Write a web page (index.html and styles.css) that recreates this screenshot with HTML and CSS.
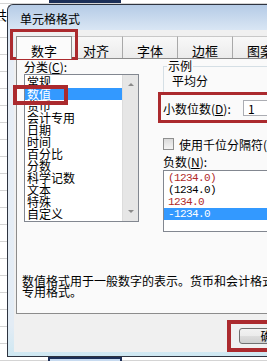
FILE: index.html
```html
<!DOCTYPE html>
<html lang="zh-CN">
<head>
    <meta charset="UTF-8">
    <title>单元格格式</title>
    <link rel="stylesheet" href="styles.css">
</head>
<body>

<div class="sheet">
    <span class="cell-text">共</span>
    <div class="sel-top"></div>
    <div class="sel-bottom"></div>
</div>

<div class="dialog">
    <div class="titlebar">单元格格式</div>
    <div class="client">
        <div class="tabs">
            <div class="tab active">数字</div>
            <div class="tab next">对齐</div>
            <div class="tab">字体</div>
            <div class="tab">边框</div>
            <div class="tab">图案</div>
        </div>
        <div class="panel">
            <div class="cols">
                <div class="left">
                    <div class="lbl">分类(<u>C</u>):</div>
                    <div class="catlist">
                        <ul class="items">
                            <li>常规</li>
                            <li class="sel">数值</li>
                            <li>货币</li>
                            <li>会计专用</li>
                            <li>日期</li>
                            <li>时间</li>
                            <li>百分比</li>
                            <li>分数</li>
                            <li>科学记数</li>
                            <li>文本</li>
                            <li>特殊</li>
                            <li>自定义</li>
                        </ul>
                        <div class="scroll">
                            <span class="arrow up"></span>
                            <span class="arrow down"></span>
                        </div>
                    </div>
                </div>
                <div class="right">
                    <fieldset class="sample">
                        <legend>示例</legend>
                        <div>平均分</div>
                    </fieldset>
                    <div class="decimals">
                        <span class="dec-label">小数位数(<u>D</u>):</span>
                        <input class="spin" type="text" value="1">
                    </div>
                    <div class="check"><span class="box"></span>使用千位分隔符(,)(<u>U</u>)</div>
                    <div class="lbl neg-label">负数(<u>N</u>):</div>
                    <ul class="neglist">
                        <li class="red">(1234.0)</li>
                        <li>(1234.0)</li>
                        <li class="red">1234.0</li>
                        <li class="sel">-1234.0</li>
                    </ul>
                </div>
            </div>
            <p class="desc">数值格式用于一般数字的表示。货币和会计格式则提供货币值计算的<br>专用格式。</p>
        </div>
        <div class="buttons">
            <button type="button">确定</button>
            <button type="button">取消</button>
        </div>
    </div>
</div>

<!-- red highlight boxes drawn over the dialog -->
<div class="mark m1"></div>
<div class="mark m2"></div>
<div class="mark m3"></div>
<div class="mark m4"></div>

</body>
</html>
```

FILE: styles.css
```css
* {
    box-sizing: border-box;
}
body {
    margin: 0;
    width: 267px;
    height: 361px;
    overflow: hidden;
    position: relative;
    font-family: "Noto Sans CJK SC", sans-serif;
    font-size: 12px;
    color: #000;
    background: #fff;
}
.sheet {
    position: absolute;
    inset: 0;
    background-image: repeating-linear-gradient(to bottom, #d4d4d4 0 1px, transparent 1px 17px);
    background-position: 0 3px;
}
.cell-text {
    position: absolute;
    left: -6px;
    top: 7px;
    font-size: 13px;
    line-height: 15px;
}
.sel-top {
    position: absolute;
    left: 49px;
    top: 0;
    width: 72px;
    height: 3px;
    background: #1c2f57;
}
.sel-bottom {
    position: absolute;
    left: 48px;
    top: 357px;
    width: 74px;
    height: 8px;
    border: 2px solid #1c2f57;
    border-bottom: 0;
    background: #c8dbf0;
}
.dialog {
    position: absolute;
    left: 7px;
    top: 4px;
    width: 300px;
    height: 353px;
    border: 1px solid #2e3440;
    border-right: 0;
    border-radius: 6px 0 0 0;
    padding: 0 0 4px 6px;
    background: linear-gradient(to bottom, #b5cbe6 0, #d9e6f4 25px, #e8eef6 60px, #e3ecf5 320px, #cfe8f2 100%);
}
.titlebar {
    height: 25px;
    line-height: 27px;
    padding-left: 6px;
    font-size: 12px;
}
.client {
    height: 322px;
    background: #f0f0f0;
    padding: 6px 0 0 2px;
}
.tabs {
    display: flex;
    height: 22px;
}
.tab {
    flex-shrink: 0;
    width: 55px;
    height: 22px;
    padding: 5px 0 0 14px;
    line-height: 17px;
    font-size: 13px;
    border-top: 1px solid #c8c8c8;
    border-right: 1px solid #a9a9a9;
    background: linear-gradient(#f8f8f8, #ebebeb);
    white-space: nowrap;
}
.tab.next {
    width: 51px;
    padding-left: 11px;
}
.tab.active {
    width: 56px;
    height: 23px;
    margin-bottom: -1px;
    position: relative;
    z-index: 1;
    border: 1px solid #8c8c8c;
    border-bottom: 0;
    background: #fbfbfb;
}
.panel {
    height: 256px;
    border: 1px solid #8c8c8c;
    border-right: 0;
    background: #fafafa;
    padding-left: 7px;
}
.cols {
    display: flex;
    gap: 24px;
}
.left {
    flex-shrink: 0;
    width: 115px;
}
.lbl {
    height: 15px;
    padding-top: 1px;
    line-height: 14px;
    white-space: nowrap;
}
.catlist {
    height: 148px;
    display: flex;
    border: 1px solid #828790;
    background: #fff;
    overflow: hidden;
}
.items {
    flex: 1;
    list-style: none;
    margin: 0;
    padding: 1px 0 0;
    line-height: 12px;
}
.items li {
    height: 12px;
    padding-left: 2px;
    white-space: nowrap;
}
.items li.sel,
.neglist li.sel {
    background: #3399ff;
    color: #fff;
}
.scroll {
    width: 16px;
    background: #e6e6e6;
    border-left: 1px solid #dcdcdc;
    display: flex;
    flex-direction: column;
    justify-content: space-between;
    align-items: center;
    padding: 8px 0 8px;
}
.arrow {
    width: 0;
    height: 0;
    border-left: 3px solid transparent;
    border-right: 3px solid transparent;
}
.arrow.up {
    border-bottom: 3px solid #8a8a8a;
}
.arrow.down {
    border-top: 3px solid #8a8a8a;
}
.right {
    flex-shrink: 0;
    width: 140px;
    padding-top: 1px;
}
.sample {
    margin: 0;
    height: 33px;
    padding: 3px 0 0 8px;
    border: 1px solid #d5dfe5;
    border-right: 0;
}
.sample legend {
    margin-left: -5px;
    padding: 0 1px;
    line-height: 12px;
}
.sample div {
    line-height: 12px;
}
.decimals {
    display: flex;
    align-items: center;
    height: 30px;
}
.dec-label {
    flex-shrink: 0;
    width: 80px;
    white-space: nowrap;
}
.spin {
    flex-shrink: 0;
    width: 50px;
    height: 16px;
    padding: 0 0 0 4px;
    border: 1px solid #abadb3;
    background: #fff;
    font: 12px "Noto Sans CJK SC", sans-serif;
}
.check {
    display: flex;
    align-items: center;
    gap: 5px;
    height: 14px;
    margin-top: 14px;
    white-space: nowrap;
}
.box {
    flex-shrink: 0;
    width: 11px;
    height: 12px;
    border: 1px solid #8e8f8f;
    background: linear-gradient(#dadada, #f4f4f4);
}
.neg-label {
    margin-top: 3px;
}
.neglist {
    list-style: none;
    margin: 1px 0 0;
    height: 62px;
    padding: 1px 0 0;
    border: 1px solid #828790;
    border-right: 0;
    background: #fff;
    font-family: "Liberation Mono", monospace;
    font-size: 11px;
    letter-spacing: -0.6px;
    line-height: 12px;
}
.neglist li {
    height: 12px;
    padding-left: 4px;
}
.neglist li.red {
    color: #b02a2a;
}
.desc {
    margin: 43px 0 0 -2px;
    line-height: 11px;
    white-space: nowrap;
}
.buttons {
    display: flex;
    gap: 8px;
    padding: 14px 0 0 223px;
}
button {
    flex-shrink: 0;
    width: 67px;
    height: 16px;
    padding: 0;
    border: 1px solid #707070;
    border-radius: 3px;
    background: linear-gradient(#f2f2f2 0, #ebebeb 50%, #dddddd 51%, #cfcfcf 100%);
    font: 12px "Noto Sans CJK SC", sans-serif;
    line-height: 14px;
}
.mark {
    position: absolute;
    border: 3px solid #ab2a2e;
}
.m1 {
    left: 10px;
    top: 29px;
    width: 68px;
    height: 31px;
}
.m2 {
    left: 13px;
    top: 85px;
    width: 55px;
    height: 20px;
    border-width: 4px;
}
.m3 {
    left: 158px;
    top: 92px;
    width: 115px;
    height: 31px;
}
.m4 {
    left: 227px;
    top: 320px;
    width: 50px;
    height: 32px;
    border-width: 4px;
}
```
